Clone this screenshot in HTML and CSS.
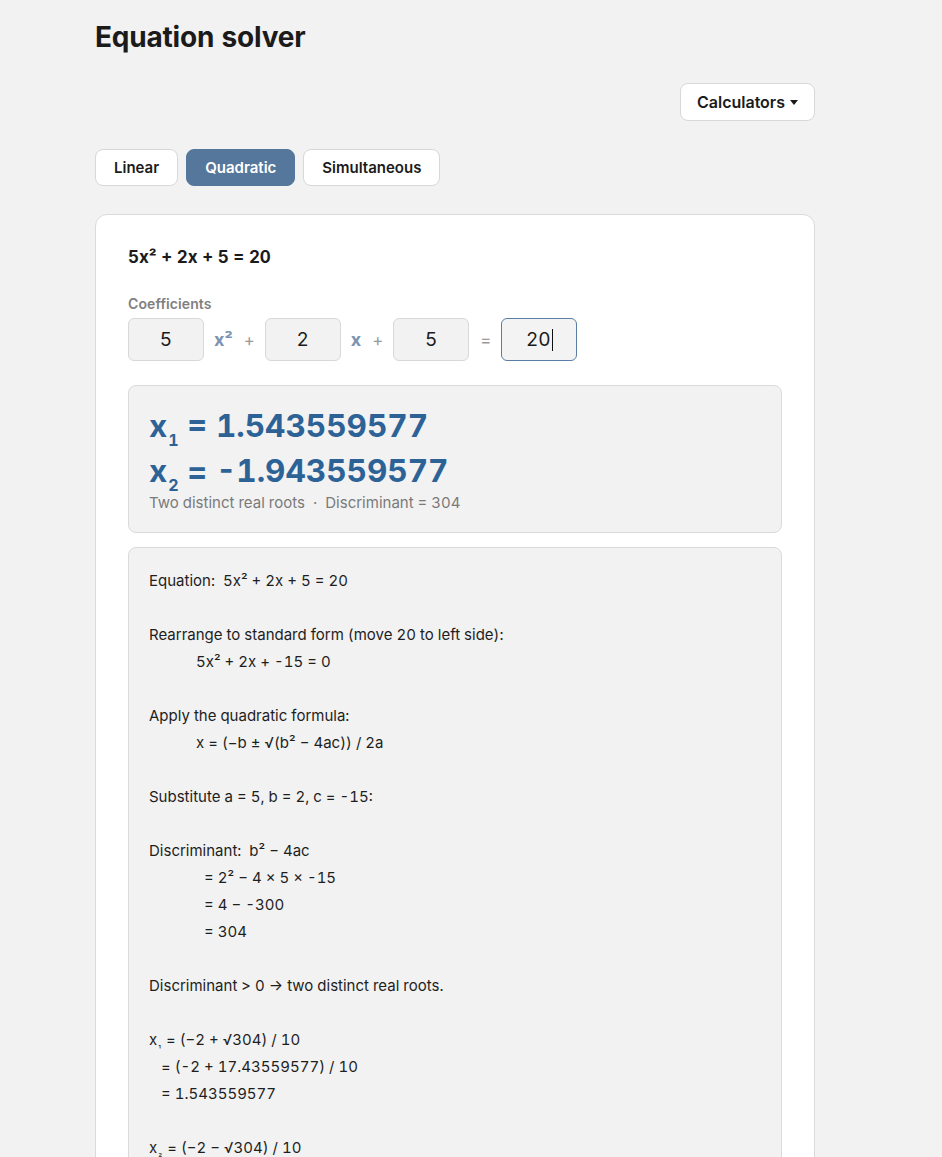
FILE: index.html
```html
<!DOCTYPE html>
<html lang="en">
<head>
<meta charset="utf-8">
<title>Equation solver</title>
<link rel="stylesheet" href="styles.css">
</head>
<body>
<div class="page">
  <h1 class="title">Equation solver</h1>
  <div class="toolbar">
    <button class="btn menu-btn">Calculators <span class="caret"></span></button>
  </div>
  <div class="tabs">
    <button class="btn tab">Linear</button>
    <button class="btn tab active">Quadratic</button>
    <button class="btn tab">Simultaneous</button>
  </div>
  <div class="card">
    <div class="equation">5x² + 2x + 5 = 20</div>
    <div class="label">Coefficients</div>
    <div class="coef-row">
      <div class="coef">5</div>
      <span class="var">x²</span>
      <span class="op">+</span>
      <div class="coef">2</div>
      <span class="var">x</span>
      <span class="op">+</span>
      <div class="coef">5</div>
      <span class="op">=</span>
      <div class="coef focus">20<span class="cursor"></span></div>
    </div>
    <div class="result">
      <div class="root">x<sub>1</sub> = 1.543559577</div>
      <div class="root">x<sub>2</sub> = -1.943559577</div>
      <div class="result-note">Two distinct real roots &nbsp;·&nbsp; Discriminant = 304</div>
    </div>
    <div class="steps">
      <div class="line">Equation:&nbsp; 5x² + 2x + 5 = 20</div>
      <div class="line blank"></div>
      <div class="line">Rearrange to standard form (move 20 to left side):</div>
      <div class="line ind-a">5x² + 2x + -15 = 0</div>
      <div class="line blank"></div>
      <div class="line">Apply the quadratic formula:</div>
      <div class="line ind-a">x = (−b ± √(b² − 4ac)) / 2a</div>
      <div class="line blank"></div>
      <div class="line">Substitute a = 5, b = 2, c = -15:</div>
      <div class="line blank"></div>
      <div class="line">Discriminant:&nbsp; b² − 4ac</div>
      <div class="line ind-b">= 2² − 4 × 5 × -15</div>
      <div class="line ind-b">= 4 − -300</div>
      <div class="line ind-b">= 304</div>
      <div class="line blank"></div>
      <div class="line">Discriminant &gt; 0 → two distinct real roots.</div>
      <div class="line blank"></div>
      <div class="line">x<span class="tiny-sub">₁</span> = (−2 + √304) / 10</div>
      <div class="line ind-c">= (-2 + 17.43559577) / 10</div>
      <div class="line ind-c">= 1.543559577</div>
      <div class="line blank"></div>
      <div class="line">x<span class="tiny-sub">₂</span> = (−2 − √304) / 10</div>
      <div class="line ind-c">= (-2 - 17.43559577) / 10</div>
      <div class="line ind-c">= -1.943559577</div>
    </div>
  </div>
</div>
</body>
</html>
```
FILE: styles.css
```css
html, body {
  margin: 0;
  padding: 0;
  background: #f2f2f2;
  font-family: Inter, "Liberation Sans", sans-serif;
  font-variant-numeric: tabular-nums;
  color: #1b1b1b;
}
.page {
  max-width: 752px;
  margin: 0 auto;
  padding-right: 32px;
  box-sizing: border-box;
}
.title {
  margin: 20px 0 0;
  font-size: 28px;
  line-height: 34px;
  font-weight: 700;
  letter-spacing: -0.2px;
}
.toolbar {
  display: flex;
  justify-content: flex-end;
  margin-top: 29px;
}
.btn {
  font-family: inherit;
  background: #fff;
  border: 1px solid #d8d8d8;
  border-radius: 8px;
  color: #1b1b1b;
  font-weight: 600;
  cursor: pointer;
}
.menu-btn {
  display: flex;
  align-items: center;
  gap: 5px;
  height: 38px;
  padding: 0 16px;
  font-size: 16px;
}
.caret {
  width: 0;
  height: 0;
  border-left: 4.5px solid transparent;
  border-right: 4.5px solid transparent;
  border-top: 5px solid #1b1b1b;
  margin-top: 1px;
}
.tabs {
  display: flex;
  gap: 8px;
  margin-top: 28px;
}
.tab {
  height: 37px;
  padding: 0 18px;
  font-size: 15px;
}
.tab.active {
  background: #55779b;
  border-color: #55779b;
  color: #fff;
}
.card {
  margin-top: 28px;
  background: #fff;
  border: 1px solid #dadada;
  border-radius: 12px;
  padding: 31px 32px 40px;
}
.equation {
  font-size: 17px;
  line-height: 22px;
  font-weight: 700;
}
.label {
  margin-top: 27px;
  font-size: 14px;
  line-height: 18px;
  font-weight: 600;
  color: #7f7f7f;
  letter-spacing: 0.1px;
}
.coef-row {
  display: flex;
  align-items: center;
  gap: 10px;
  margin-top: 5px;
}
.coef {
  box-sizing: border-box;
  width: 76px;
  height: 43px;
  display: flex;
  align-items: center;
  justify-content: center;
  background: #f2f2f2;
  border: 1px solid #d8d8d8;
  border-radius: 6px;
  font-size: 19px;
  color: #1b1b1b;
}
.coef.focus {
  border-color: #5a7da5;
  background: #f3f3f3;
}
.cursor {
  display: inline-block;
  width: 1px;
  height: 22px;
  background: #111;
  margin-left: 1px;
}
.var {
  font-size: 18px;
  font-weight: 700;
  color: #7c94b2;
}
.op {
  font-size: 17px;
  color: #9a9a9a;
  padding-left: 1px;
}
.result {
  margin-top: 24px;
  background: #f2f2f2;
  border: 1px solid #dadada;
  border-radius: 8px;
  padding: 17px 20px 19px;
}
.root {
  font-size: 31.5px;
  line-height: 45px;
  font-weight: 700;
  color: #2d6297;
}
.root sub {
  font-size: 16px;
  vertical-align: -9px;
  line-height: 0;
  margin-left: 1px;
}
.result-note {
  font-size: 15px;
  line-height: 20px;
  color: #7a7a7a;
}
.steps {
  margin-top: 14px;
  background: #f2f2f2;
  border: 1px solid #dadada;
  border-radius: 8px;
  padding: 19px 20px 18px;
}
.line {
  font-size: 15px;
  line-height: 27px;
  height: 27px;
  color: #1e1e1e;
  white-space: pre;
}
.tiny-sub {
  font-size: 9px;
  line-height: 0;
  vertical-align: -2px;
  margin: 0 1px;
}
.ind-a { padding-left: 47px; }
.ind-b { padding-left: 55px; }
.ind-c { padding-left: 12px; }
```
